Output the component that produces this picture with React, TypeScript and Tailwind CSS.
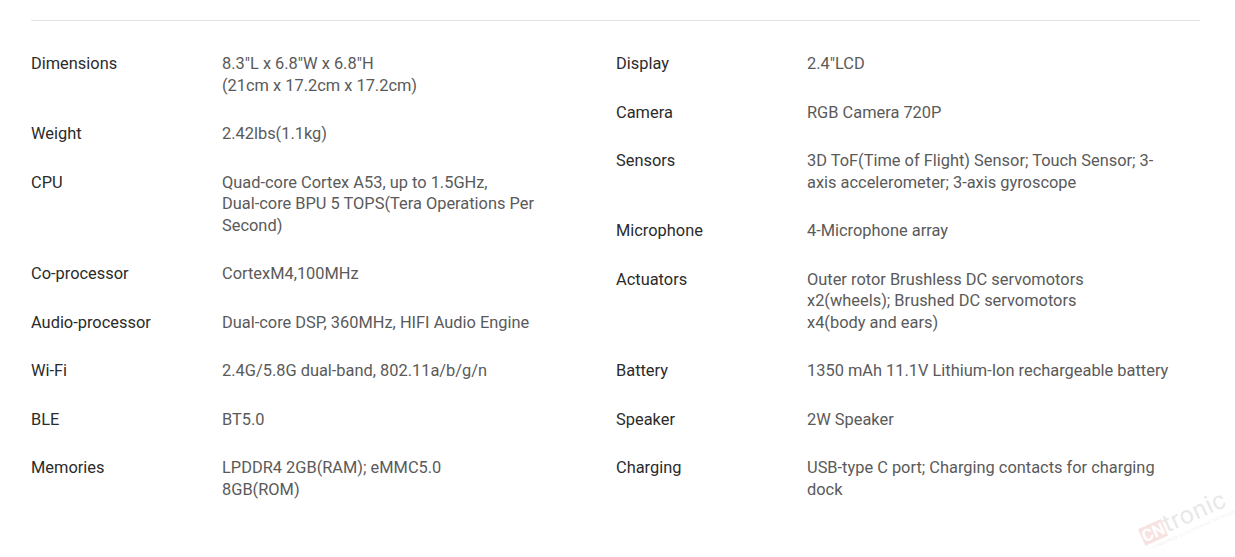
import React from 'react';

type Spec = { label: string; lines: string[] };

const left: Spec[] = [
  { label: 'Dimensions', lines: ['8.3"L x 6.8"W x 6.8"H', '(21cm x 17.2cm x 17.2cm)'] },
  { label: 'Weight', lines: ['2.42lbs(1.1kg)'] },
  { label: 'CPU', lines: ['Quad-core Cortex A53, up to 1.5GHz,', 'Dual-core BPU 5 TOPS(Tera Operations Per', 'Second)'] },
  { label: 'Co-processor', lines: ['CortexM4,100MHz'] },
  { label: 'Audio-processor', lines: ['Dual-core DSP, 360MHz, HIFI Audio Engine'] },
  { label: 'Wi-Fi', lines: ['2.4G/5.8G dual-band, 802.11a/b/g/n'] },
  { label: 'BLE', lines: ['BT5.0'] },
  { label: 'Memories', lines: ['LPDDR4 2GB(RAM); eMMC5.0', '8GB(ROM)'] },
];

const right: Spec[] = [
  { label: 'Display', lines: ['2.4"LCD'] },
  { label: 'Camera', lines: ['RGB Camera 720P'] },
  { label: 'Sensors', lines: ['3D ToF(Time of Flight) Sensor; Touch Sensor; 3-', 'axis accelerometer; 3-axis gyroscope'] },
  { label: 'Microphone', lines: ['4-Microphone array'] },
  { label: 'Actuators', lines: ['Outer rotor Brushless DC servomotors', 'x2(wheels); Brushed DC servomotors', 'x4(body and ears)'] },
  { label: 'Battery', lines: ['1350 mAh 11.1V Lithium-Ion rechargeable battery'] },
  { label: 'Speaker', lines: ['2W Speaker'] },
  { label: 'Charging', lines: ['USB-type C port; Charging contacts for charging', 'dock'] },
];

const SpecColumn = ({ items }: { items: Spec[] }) => (
  <div className="flex flex-col gap-[27px]">
    {items.map((s) => (
      <div key={s.label} className="flex leading-[21.5px]">
        <div className="w-[191px] shrink-0 text-[#2b2b2b]">{s.label}</div>
        <div className="text-[#5a5a5a]">
          {s.lines.map((l, i) => (
            <div key={i} className="whitespace-nowrap">{l}</div>
          ))}
        </div>
      </div>
    ))}
  </div>
);

export default function App() {
  return (
    <div
      className="relative w-[1235px] h-[557px] bg-white overflow-hidden text-[16.4px]"
      style={{ fontFamily: 'Roboto, "Liberation Sans", Arial, sans-serif' }}
    >
      <div className="pt-[20px] pl-[31px] w-[1200px]">
        <div className="h-px bg-[#e3e3e3]" />
        <div className="grid grid-cols-[585px_1fr] pt-[32px]">
          <SpecColumn items={left} />
          <SpecColumn items={right} />
        </div>
      </div>

      {/* watermark */}
      <div className="absolute left-[1138px] top-[504px] w-[100px] -rotate-[24deg] opacity-25 select-none">
        <div className="flex items-end leading-none">
          <span className="bg-[#e38f8f] text-white font-bold text-[17px] px-[1px] leading-[18px]">CN</span>
          <span className="text-[#a8a8a8] text-[25px] leading-[22px] tracking-[0.5px]">tronic</span>
        </div>
        <div className="mt-[2px] text-[4px] leading-[5px] tracking-[0.8px] text-[#b0b0b0] pl-[6px] whitespace-nowrap">
          CONSUMER ELECTRONICS RETAILER
        </div>
      </div>
    </div>
  );
}
